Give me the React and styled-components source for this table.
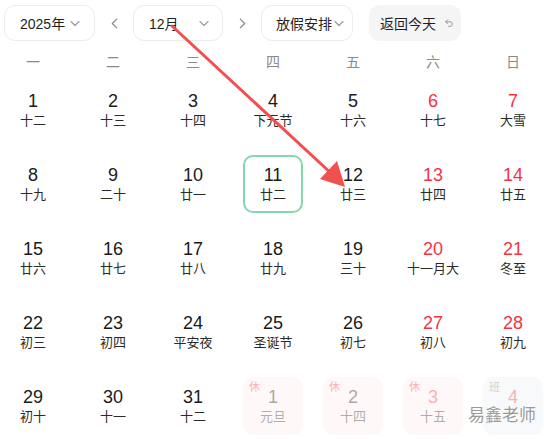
import React from 'react'
import styled, { createGlobalStyle } from 'styled-components'
import { Undo2 } from 'lucide-react'

const GlobalStyle = createGlobalStyle`
	html, body {
		margin: 0;
		padding: 0;
		background: #fff;
		overflow: hidden;
	}
	body {
		font-family: 'Liberation Sans', 'Noto Sans CJK SC', sans-serif;
		color: #1a1a1a;
	}
`

const Page = styled.div`
	position: relative;
	width: 544px;
	height: 439px;
	overflow: hidden;
`

const Toolbar = styled.div`
	display: flex;
	align-items: center;
	padding: 5px 0 0 4px;
	height: 36px;
`

const Select = styled.div`
	box-sizing: border-box;
	width: ${p => p.$width}px;
	height: 36px;
	display: flex;
	align-items: center;
	justify-content: space-between;
	padding: 0 ${p => p.$padRight}px 0 ${p => p.$padLeft}px;
	border: 1px solid #ececec;
	border-radius: 11px;
	font-size: 14px;
	color: #1f1f1f;
	white-space: nowrap;
`

const NavButton = styled.div`
	width: 38px;
	height: 36px;
	display: flex;
	align-items: center;
	justify-content: center;
`

const TodayButton = styled.div`
	box-sizing: border-box;
	margin-left: 16px;
	width: 92px;
	height: 36px;
	display: flex;
	align-items: center;
	gap: 8px;
	padding-left: 11px;
	background: #f5f5f5;
	border-radius: 11px;
	font-size: 14px;
	color: #1f1f1f;
	white-space: nowrap;
`

const Calendar = styled.div`
	margin-left: -7px;
	width: 560px;
`

const WeekHeader = styled.div`
	display: grid;
	grid-template-columns: repeat(7, 80px);
	margin-top: 11px;
	height: 20px;
	line-height: 20px;
	font-size: 14px;
	color: #8a8a8a;
	text-align: center;
`

const Days = styled.div`
	display: grid;
	grid-template-columns: repeat(7, 80px);
	row-gap: 16px;
	margin-top: 9px;
`

const Cell = styled.div`
	position: relative;
	box-sizing: border-box;
	justify-self: center;
	width: 60px;
	height: 58px;
	display: flex;
	flex-direction: column;
	align-items: center;
	justify-content: center;
	border-radius: 10px;
	border: 2px solid ${p => (p.$selected ? '#86d6af' : 'transparent')};
	background: ${p => (p.$tag === '休' ? '#ffeded' : p.$tag === '班' ? '#eef0f5' : 'transparent')};
	opacity: ${p => (p.$muted ? 0.38 : 1)};
`

const DayNum = styled.div`
	font-size: 18px;
	line-height: 22px;
	color: ${p => (p.$weekend ? '#f5333f' : '#1a1a1a')};
`

const Lunar = styled.div`
	font-size: 13px;
	line-height: 18px;
	height: 18px;
	color: #2a2a2a;
	white-space: nowrap;
`

const Tag = styled.span`
	position: absolute;
	top: 2px;
	left: 4px;
	font-size: 11px;
	line-height: 12px;
	color: ${p => (p.$kind === '休' ? '#f5333f' : '#8a8a8a')};
`

const Watermark = styled.div`
	position: absolute;
	right: 8px;
	bottom: 13px;
	font-size: 17px;
	color: #9a9a9a;
	text-shadow: 0 0 2px #fff, 0 0 2px #fff, 0 0 1px #fff;
`

const Annotation = styled.svg`
	position: absolute;
	left: 0;
	top: 0;
	pointer-events: none;
`

const Chevron = ({ dir = 'down', size = 10, color = '#9a9a9a' }) => {
	const paths = {
		down: 'M1 3.5 L5 7.5 L9 3.5',
		left: 'M7 1 L3 5 L7 9',
		right: 'M3 1 L7 5 L3 9',
	}
	return (
		<svg width={size} height={size} viewBox='0 0 10 10'>
			<path d={paths[dir]} fill='none' stroke={color} strokeWidth='1.1' strokeLinecap='round' strokeLinejoin='round' />
		</svg>
	)
}

const weekdays = ['一', '二', '三', '四', '五', '六', '日']

const lunar = [
	'十二', '十三', '十四', '下元节', '十六', '十七', '大雪',
	'十九', '二十', '廿一', '廿二', '廿三', '廿四', '廿五',
	'廿六', '廿七', '廿八', '廿九', '三十', '十一月大', '冬至',
	'初三', '初四', '平安夜', '圣诞节', '初七', '初八', '初九',
	'初十', '十一', '十二',
]

// next month's first days, the last one's lunar text sits under the watermark
const days = [
	...lunar.map((l, i) => ({ day: i + 1, lunar: l })),
	{ day: 1, lunar: '元旦', tag: '休', muted: true },
	{ day: 2, lunar: '十四', tag: '休', muted: true },
	{ day: 3, lunar: '十五', tag: '休', muted: true },
	{ day: 4, lunar: '', tag: '班', muted: true },
]

const App = () => (
	<Page>
		<GlobalStyle />
		<Toolbar>
			<Select $width={91} $padLeft={15} $padRight={14}>
				<span>2025年</span>
				<Chevron />
			</Select>
			<NavButton>
				<Chevron dir='left' size={11} color='#8a8a8a' />
			</NavButton>
			<Select $width={90} $padLeft={15} $padRight={13}>
				<span>12月</span>
				<Chevron />
			</Select>
			<NavButton>
				<Chevron dir='right' size={11} color='#8a8a8a' />
			</NavButton>
			<Select $width={92} $padLeft={14} $padRight={8}>
				<span>放假安排</span>
				<Chevron />
			</Select>
			<TodayButton>
				<span>返回今天</span>
				<Undo2 size={10} color='#8a8a8a' strokeWidth={2} />
			</TodayButton>
		</Toolbar>
		<Calendar>
			<WeekHeader>
				{weekdays.map(w => (
					<div key={w}>{w}</div>
				))}
			</WeekHeader>
			<Days>
				{days.map((d, i) => {
					const col = i % 7
					return (
						<Cell key={i} $selected={!d.muted && d.day === 11} $tag={d.tag} $muted={d.muted}>
							{d.tag && <Tag $kind={d.tag}>{d.tag}</Tag>}
							<DayNum $weekend={col >= 5}>{d.day}</DayNum>
							<Lunar>{d.lunar}</Lunar>
						</Cell>
					)
				})}
			</Days>
		</Calendar>
		<Annotation width='544' height='439'>
			<line x1='172' y1='26' x2='333' y2='175' stroke='#f24f4f' strokeWidth='3' strokeLinecap='round' />
			<polygon points='345,187 337,161 320,179' fill='#f24f4f' />
		</Annotation>
		<Watermark>易鑫老师</Watermark>
	</Page>
)

export default App
